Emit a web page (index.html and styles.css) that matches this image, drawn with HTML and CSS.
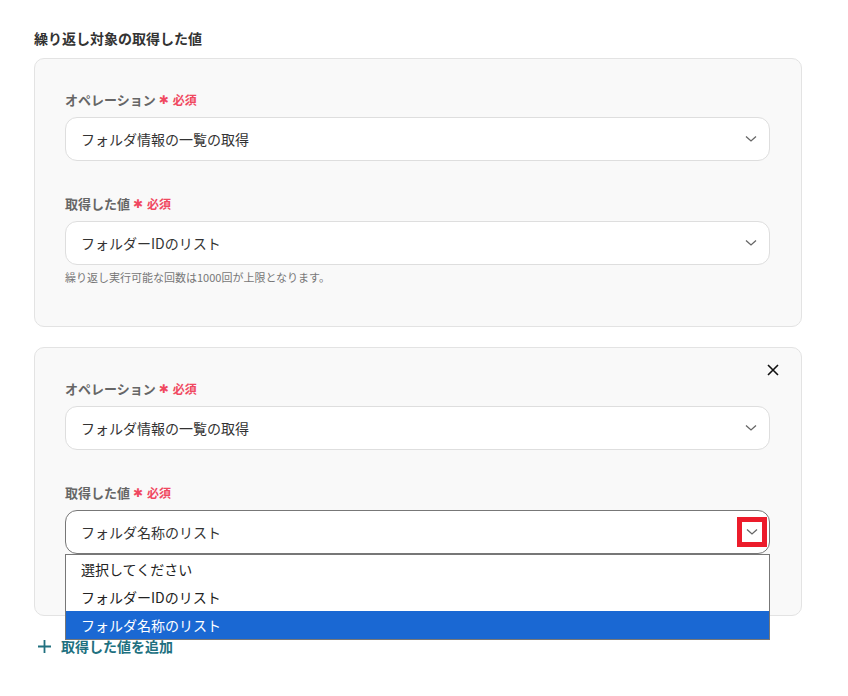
FILE: index.html
```html
<!DOCTYPE html>
<html lang="ja">
<head>
    <meta charset="UTF-8">
    <meta name="viewport" content="width=device-width, initial-scale=1.0">
    <title>繰り返し対象の取得した値</title>
    <link rel="stylesheet" href="styles.css">
</head>
<body>
    <div class="page">
        <h3 class="section-title">繰り返し対象の取得した値</h3>

        <div class="loop-card">
            <div class="field">
                <label class="field-label">オペレーション<span class="req"><span class="star">✱</span>必須</span></label>
                <div class="select-box">
                    <span class="select-value">フォルダ情報の一覧の取得</span>
                    <svg class="chevron" width="12" height="8" viewBox="0 0 12 8"><path d="M1 1.5 L6 6 L11 1.5" fill="none" stroke="#666" stroke-width="1.3"/></svg>
                </div>
            </div>
            <div class="field">
                <label class="field-label">取得した値<span class="req"><span class="star">✱</span>必須</span></label>
                <div class="select-box">
                    <span class="select-value">フォルダーIDのリスト</span>
                    <svg class="chevron" width="12" height="8" viewBox="0 0 12 8"><path d="M1 1.5 L6 6 L11 1.5" fill="none" stroke="#666" stroke-width="1.3"/></svg>
                </div>
                <p class="hint">繰り返し実行可能な回数は1000回が上限となります。</p>
            </div>
        </div>

        <div class="loop-card">
            <button class="close-btn" aria-label="削除">
                <svg width="12" height="12" viewBox="0 0 12 12"><path d="M1 1 L11 11 M11 1 L1 11" stroke="#111" stroke-width="1.6"/></svg>
            </button>
            <div class="field">
                <label class="field-label">オペレーション<span class="req"><span class="star">✱</span>必須</span></label>
                <div class="select-box">
                    <span class="select-value">フォルダ情報の一覧の取得</span>
                    <svg class="chevron" width="12" height="8" viewBox="0 0 12 8"><path d="M1 1.5 L6 6 L11 1.5" fill="none" stroke="#666" stroke-width="1.3"/></svg>
                </div>
            </div>
            <div class="field last">
                <label class="field-label">取得した値<span class="req"><span class="star">✱</span>必須</span></label>
                <div class="select-box open">
                    <span class="select-value">フォルダ名称のリスト</span>
                    <span class="mark">
                        <svg class="chevron" width="12" height="8" viewBox="0 0 12 8"><path d="M1 1.5 L6 6 L11 1.5" fill="none" stroke="#666" stroke-width="1.3"/></svg>
                    </span>
                    <ul class="options">
                        <li>選択してください</li>
                        <li>フォルダーIDのリスト</li>
                        <li class="active">フォルダ名称のリスト</li>
                    </ul>
                </div>
            </div>
        </div>

        <button class="add-btn">
            <svg class="plus" width="13" height="13" viewBox="0 0 13 13"><path d="M6.5 0 V13 M0 6.5 H13" stroke="#20707f" stroke-width="1.8"/></svg>
            取得した値を追加
        </button>
    </div>
</body>
</html>
```

FILE: styles.css
```css
body {
    margin: 0;
    background: #fff;
    font-family: "Noto Sans CJK JP", "Noto Sans", sans-serif;
    color: #333;
}

.page {
    padding: 28px 46px 0 34px;
}

.section-title {
    margin: 0 0 10px;
    font-size: 14px;
    line-height: 20px;
    font-weight: bold;
    color: #333;
}

.loop-card {
    position: relative;
    background: #f9f9f9;
    border: 1px solid #e3e3e3;
    border-radius: 10px;
    padding: 30px 31px 41px 30px;
    margin-bottom: 20px;
}

.field + .field {
    margin-top: 32px;
}

.field.last {
    padding-bottom: 20px;
}

.field-label {
    display: flex;
    align-items: center;
    height: 20px;
    font-size: 13px;
    font-weight: bold;
    color: #666;
}

.req {
    display: inline-flex;
    align-items: center;
    margin-left: 3px;
    font-size: 12px;
    font-weight: bold;
    color: #f04860;
}

.star {
    font-family: "DejaVu Sans", sans-serif;
    font-size: 12px;
    font-weight: normal;
    margin-right: 4px;
    position: relative;
    top: 1px;
}

.select-box {
    position: relative;
    display: flex;
    align-items: center;
    justify-content: space-between;
    height: 42px;
    margin-top: 8px;
    padding: 0 12px 0 15px;
    background: #fff;
    border: 1px solid #dedede;
    border-radius: 12px;
    font-size: 14px;
    color: #333;
}

.select-box.open {
    border-color: #777;
}

.chevron {
    display: block;
}

.mark {
    display: flex;
    align-items: center;
    justify-content: center;
    width: 20px;
    height: 20px;
    margin-right: -10px;
    border: 5px solid #ec1c2b;
}

.options {
    position: absolute;
    left: -1px;
    right: -1px;
    top: 43px;
    z-index: 2;
    margin: 0;
    padding: 0;
    list-style: none;
    background: #fff;
    border: 1px solid #777;
}

.options li {
    height: 28px;
    line-height: 28px;
    padding-left: 15px;
    font-size: 14px;
    color: #222;
}

.options li.active {
    background: #1a68d3;
    color: #fff;
}

.hint {
    margin: 4px 0 0;
    font-size: 11px;
    line-height: 16px;
    color: #777;
}

.close-btn {
    position: absolute;
    top: 16px;
    right: 22px;
    padding: 0;
    border: none;
    background: none;
    cursor: pointer;
}

.close-btn svg {
    display: block;
}

.add-btn {
    display: flex;
    align-items: center;
    padding: 0 0 0 4px;
    border: none;
    background: none;
    font-family: inherit;
    font-size: 14px;
    font-weight: bold;
    line-height: 20px;
    color: #20707f;
    cursor: pointer;
}

.plus {
    margin-right: 10px;
}
```
